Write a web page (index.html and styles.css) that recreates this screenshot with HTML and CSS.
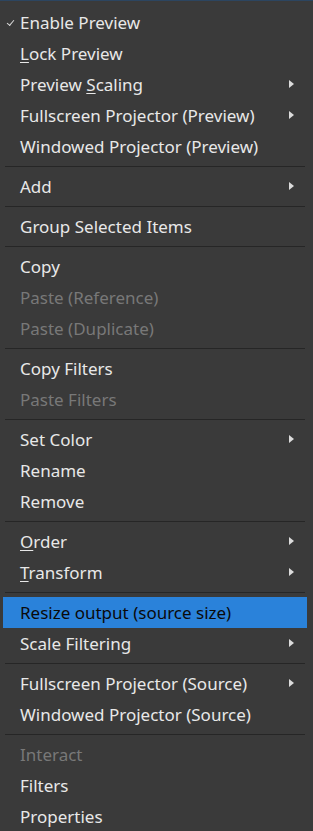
FILE: index.html
```html
<!DOCTYPE html>
<html lang="en">
<head>
    <meta charset="UTF-8">
    <meta name="viewport" content="width=device-width, initial-scale=1.0">
    <title>Context Menu</title>
    <link rel="stylesheet" href="styles.css">
</head>
<body>
    <div class="menu">
        <div class="item checked">Enable Preview</div>
        <div class="item"><u>L</u>ock Preview</div>
        <div class="item sub">Preview <u>S</u>caling</div>
        <div class="item sub">Fullscreen Projector (Preview)</div>
        <div class="item">Windowed Projector (Preview)</div>
        <div class="sep"></div>
        <div class="item sub">Add</div>
        <div class="sep"></div>
        <div class="item">Group Selected Items</div>
        <div class="sep"></div>
        <div class="item">Copy</div>
        <div class="item disabled">Paste (Reference)</div>
        <div class="item disabled">Paste (Duplicate)</div>
        <div class="sep"></div>
        <div class="item">Copy Filters</div>
        <div class="item disabled">Paste Filters</div>
        <div class="sep"></div>
        <div class="item sub">Set Color</div>
        <div class="item">Rename</div>
        <div class="item">Remove</div>
        <div class="sep"></div>
        <div class="item sub"><u>O</u>rder</div>
        <div class="item sub"><u>T</u>ransform</div>
        <div class="sep"></div>
        <div class="item active">Resize output (source size)</div>
        <div class="item sub">Scale Filtering</div>
        <div class="sep"></div>
        <div class="item sub">Fullscreen Projector (Source)</div>
        <div class="item">Windowed Projector (Source)</div>
        <div class="sep"></div>
        <div class="item disabled">Interact</div>
        <div class="item">Filters</div>
        <div class="item">Properties</div>
    </div>
</body>
</html>
```

FILE: styles.css
```css
body {
    margin: 0;
    background-color: #3a3a3a;
    font-family: "Noto Sans", "Open Sans", sans-serif;
    font-size: 17px;
    color: #e8e8e8;
}
.menu {
    border-top: 1px solid #2c4560;
    padding: 6px 6px 0 3px;
    height: 824px;
    overflow: hidden;
}
.item {
    position: relative;
    height: 31px;
    line-height: 31px;
    padding-left: 17px;
    white-space: nowrap;
}
.item u {
    text-underline-offset: 2px;
}
.checked::before {
    content: "";
    position: absolute;
    left: 4px;
    top: 13px;
    width: 6px;
    height: 3px;
    border-left: 1.5px solid #d8d8d8;
    border-bottom: 1.5px solid #d8d8d8;
    transform: rotate(-50deg);
}
.sub::after {
    content: "";
    position: absolute;
    right: 13px;
    top: 11px;
    border-left: 5px solid #dcdcdc;
    border-top: 4.5px solid transparent;
    border-bottom: 4.5px solid transparent;
}
.disabled {
    color: #787878;
}
.active {
    background-color: #2a82da;
    color: #0a0a0a;
}
.sep {
    height: 1px;
    margin: 4px 2px 4px 2px;
    background-color: #262626;
}
```
